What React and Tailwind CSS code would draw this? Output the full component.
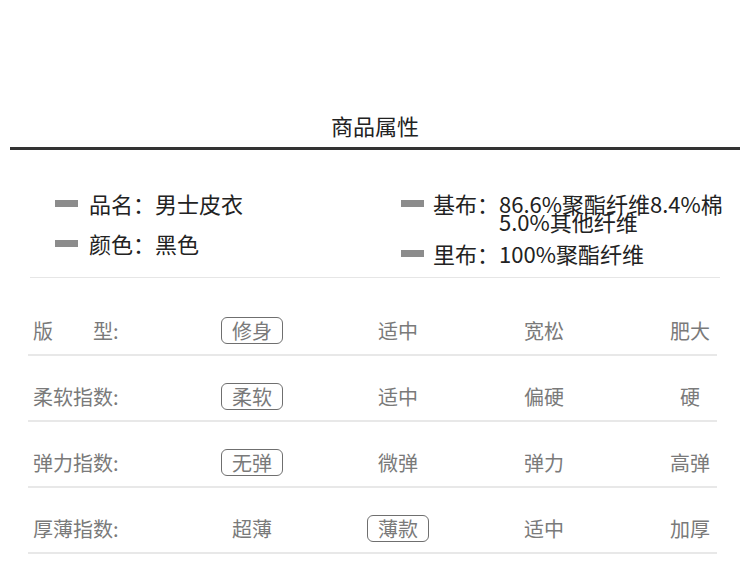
const rows = [
  { label: '版\u3000\u3000型:', options: ['修身', '适中', '宽松', '肥大'], active: 0 },
  { label: '柔软指数:', options: ['柔软', '适中', '偏硬', '硬'], active: 0 },
  { label: '弹力指数:', options: ['无弹', '微弹', '弹力', '高弹'], active: 0 },
  { label: '厚薄指数:', options: ['超薄', '薄款', '适中', '加厚'], active: 1 },
];

const Bar = () => <span className="inline-block w-[23px] h-[7px] bg-[#8c8c8c] shrink-0" />;

export default function App() {
  return (
    <div className="w-[750px] h-[574px] bg-white overflow-hidden font-['Noto_Sans_CJK_SC',sans-serif]">
      {/* Title */}
      <div className="pt-[111px] text-center text-[22px] leading-[28px] text-[#222]">商品属性</div>
      <div className="mx-[10px] mt-[8px] h-[3px] bg-[#333]" />

      {/* Basic info */}
      <div className="flex mt-[44px] text-[22px] text-[#222]">
        <div className="pl-[55px] w-[401px] flex flex-col gap-[22px]">
          <div className="flex items-center gap-[11px] h-[18px] leading-[18px]">
            <Bar />
            <span>品名：男士皮衣</span>
          </div>
          <div className="flex items-center gap-[11px] h-[18px] leading-[18px]">
            <Bar />
            <span>颜色：黑色</span>
          </div>
        </div>
        <div className="flex flex-col">
          <div className="flex items-start leading-[18px]">
            <span className="mt-[6px] mr-[9px] flex"><Bar /></span>
            <span>基布：</span>
            <span className="w-[232px]">86.6%聚酯纤维8.4%棉5.0%其他纤维</span>
          </div>
          <div className="flex items-center gap-[9px] h-[18px] leading-[18px] mt-[14px]">
            <Bar />
            <span>里布：100%聚酯纤维</span>
          </div>
        </div>
      </div>
      <div className="ml-[30px] w-[690px] mt-[15px] h-[1px] bg-[#e6e6e6]" />

      {/* Attribute table */}
      <div className="ml-[28px] w-[689px] mt-[12px] text-[20px] text-[#7a7a7a]">
        {rows.map((row, i) => (
          <div key={i} className="border-b-2 border-[#e8e8e8] pt-[27px] pb-[11px]">
            <div className="grid grid-cols-[151px_146px_146px_146px_146px] h-[26px] items-center leading-[26px]">
              <span className="pl-[5px]">{row.label}</span>
              {row.options.map((opt, j) => (
                <div key={j} className="flex justify-center">
                  {j === row.active ? (
                    <span className="inline-flex items-center justify-center w-[62px] h-[27px] border-[1.5px] border-[#6f6f6f] rounded-[6px] leading-none">
                      {opt}
                    </span>
                  ) : (
                    <span>{opt}</span>
                  )}
                </div>
              ))}
            </div>
          </div>
        ))}
      </div>
    </div>
  );
}
